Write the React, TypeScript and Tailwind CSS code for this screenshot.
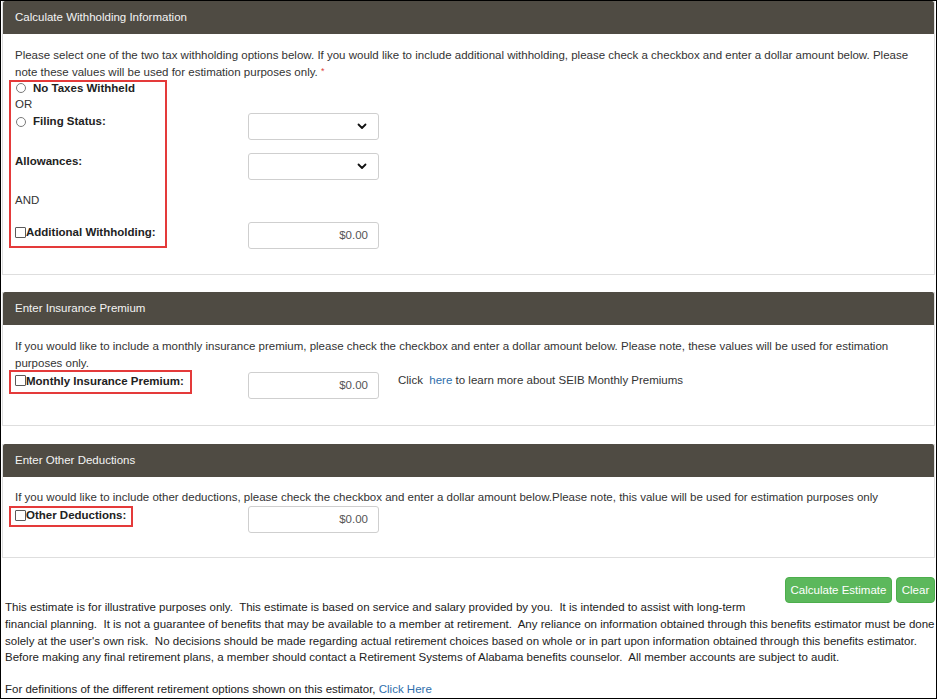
import React from "react";

const RED = "border-[#e43a3a]";

function Panel({
  title,
  children,
  className = "",
}: {
  title: string;
  children: React.ReactNode;
  className?: string;
}) {
  return (
    <div className={"border-x border-b border-[#dedede] " + className}>
      <div className="h-[33px] bg-[#4f4b43] text-[#f4f4f4] flex items-center pl-[12px] rounded-t-[2px]">
        {title}
      </div>
      <div className="px-[12px]">{children}</div>
    </div>
  );
}

function Radio() {
  return (
    <span className="inline-block w-[10px] h-[10px] rounded-full border border-[#7a7a7a] bg-white ml-[1px] mr-[7px]" />
  );
}

function Checkbox() {
  return (
    <span className="inline-block w-[11px] h-[11px] border border-[#5a5a5a] bg-white rounded-[1px] shrink-0" />
  );
}

function Select() {
  return (
    <div className="w-[131px] h-[27px] border border-[#cfcfcf] rounded-[3px] bg-white flex items-center justify-end pr-[11px]">
      <svg width="10" height="7" viewBox="0 0 10 7">
        <polyline
          points="1.5,1.5 5,5 8.5,1.5"
          fill="none"
          stroke="#111"
          strokeWidth="1.8"
          strokeLinecap="round"
          strokeLinejoin="round"
        />
      </svg>
    </div>
  );
}

function Money() {
  return (
    <div className="w-[131px] h-[27px] border border-[#cfcfcf] rounded-[3px] bg-white flex items-center justify-end pr-[10px] text-[#555]">
      $0.00
    </div>
  );
}

export default function App() {
  return (
    <div className="w-[937px] h-[699px] overflow-hidden border border-black bg-white text-[#333] font-['Liberation_Sans',Arial,sans-serif] text-[11.5px] leading-[16.7px]">
      <div className="px-px">
        {/* Panel 1 */}
        <Panel title="Calculate Withholding Information">
          <div className="pt-[13px]">
            <p>
              Please select one of the two tax withholding options below. If you would like to include additional
              withholding, please check a checkbox and enter a dollar amount below. Please note these values will be
              used for estimation purposes only.{" "}
              <span className="text-[#e0403c] text-[9px] align-top leading-[14px]">*</span>
            </p>
            <div className="relative">
              <div className={"absolute left-[-6px] top-0 w-[158px] h-[168px] border-2 " + RED} />
              <div className="h-[16px] flex items-center font-bold text-[#222]">
                <Radio />
                No Taxes Withheld
              </div>
              <div className="h-[16px] flex items-center">OR</div>
              <div className="flex mt-[1px]">
                <div className="w-[233px] flex items-start font-bold text-[#222]">
                  <span className="h-[16.7px] flex items-center">
                    <Radio />
                    Filing Status:
                  </span>
                </div>
                <Select />
              </div>
              <div className="flex mt-[13px]">
                <div className="w-[233px] font-bold text-[#222]">Allowances:</div>
                <Select />
              </div>
              <div className="mt-[12px]">AND</div>
              <div className="flex mt-[13px]">
                <div className="w-[233px] pt-[2px] font-bold text-[#222] flex items-start">
                  <span className="h-[16.7px] flex items-center">
                    <Checkbox />
                    Additional Withholding:
                  </span>
                </div>
                <Money />
              </div>
            </div>
            <div className="h-[25px]" />
          </div>
        </Panel>

        {/* Panel 2 */}
        <Panel title="Enter Insurance Premium" className="mt-[17px]">
          <div className="pt-[13px]">
            <p>
              If you would like to include a monthly insurance premium, please check the checkbox and enter a dollar
              amount below. Please note, these values will be used for estimation purposes only.
            </p>
            <div className="relative flex">
              <div className={"absolute left-[-6px] top-[-2px] w-[183px] h-[24px] border-2 " + RED} />
              <div className="w-[233px] pt-[1px] font-bold text-[#222] flex items-start">
                <span className="h-[16.7px] flex items-center">
                  <Checkbox />
                  Monthly Insurance Premium:
                </span>
              </div>
              <Money />
              <div className="ml-[19px] pt-0">
                Click&nbsp; <span className="text-[#2f6fad]">here</span> to learn more about SEIB Monthly Premiums
              </div>
            </div>
            <div className="h-[26px]" />
          </div>
        </Panel>

        {/* Panel 3 */}
        <Panel title="Enter Other Deductions" className="mt-[18px]">
          <div className="pt-[12px]">
            <p>
              If you would like to include other deductions, please check the checkbox and enter a dollar amount
              below.Please note, this value will be used for estimation purposes only
            </p>
            <div className="relative flex mt-[1px]">
              <div className={"absolute left-[-6px] top-0 w-[124px] h-[21px] border-2 " + RED} />
              <div className="w-[233px] pt-[1px] font-bold text-[#222] flex items-start">
                <span className="h-[16.7px] flex items-center">
                  <Checkbox />
                  Other Deductions:
                </span>
              </div>
              <Money />
            </div>
            <div className="h-[24px]" />
          </div>
        </Panel>
      </div>

      {/* Footer */}
      <div className="pl-[4px] pr-[1px]">
        <div className="flex justify-end gap-[4px] mt-[19px]">
          <button className="w-[107px] h-[26px] rounded-[4px] bg-[#5cb85c] border border-[#4cae4c] text-white">
            Calculate Estimate
          </button>
          <button className="w-[39px] h-[26px] rounded-[4px] bg-[#5cb85c] border border-[#4cae4c] text-white">
            Clear
          </button>
        </div>
        <p className="-mt-[4px] whitespace-nowrap text-[#222]">
          This estimate is for illustrative purposes only.&nbsp; This estimate is based on service and salary provided
          by you.&nbsp; It is intended to assist with long-term
          <br />
          financial planning.&nbsp; It is not a guarantee of benefits that may be available to a member at
          retirement.&nbsp; Any reliance on information obtained through this benefits estimator must be done
          <br />
          solely at the user's own risk.&nbsp; No decisions should be made regarding actual retirement choices based on
          whole or in part upon information obtained through this benefits estimator.
          <br />
          Before making any final retirement plans, a member should contact a Retirement Systems of Alabama benefits
          counselor.&nbsp; All member accounts are subject to audit.
        </p>
        <p className="mt-[15px] whitespace-nowrap text-[#222]">
          For definitions of the different retirement options shown on this estimator,{" "}
          <span className="text-[#2f6fad]">Click Here</span>
        </p>
      </div>
    </div>
  );
}
